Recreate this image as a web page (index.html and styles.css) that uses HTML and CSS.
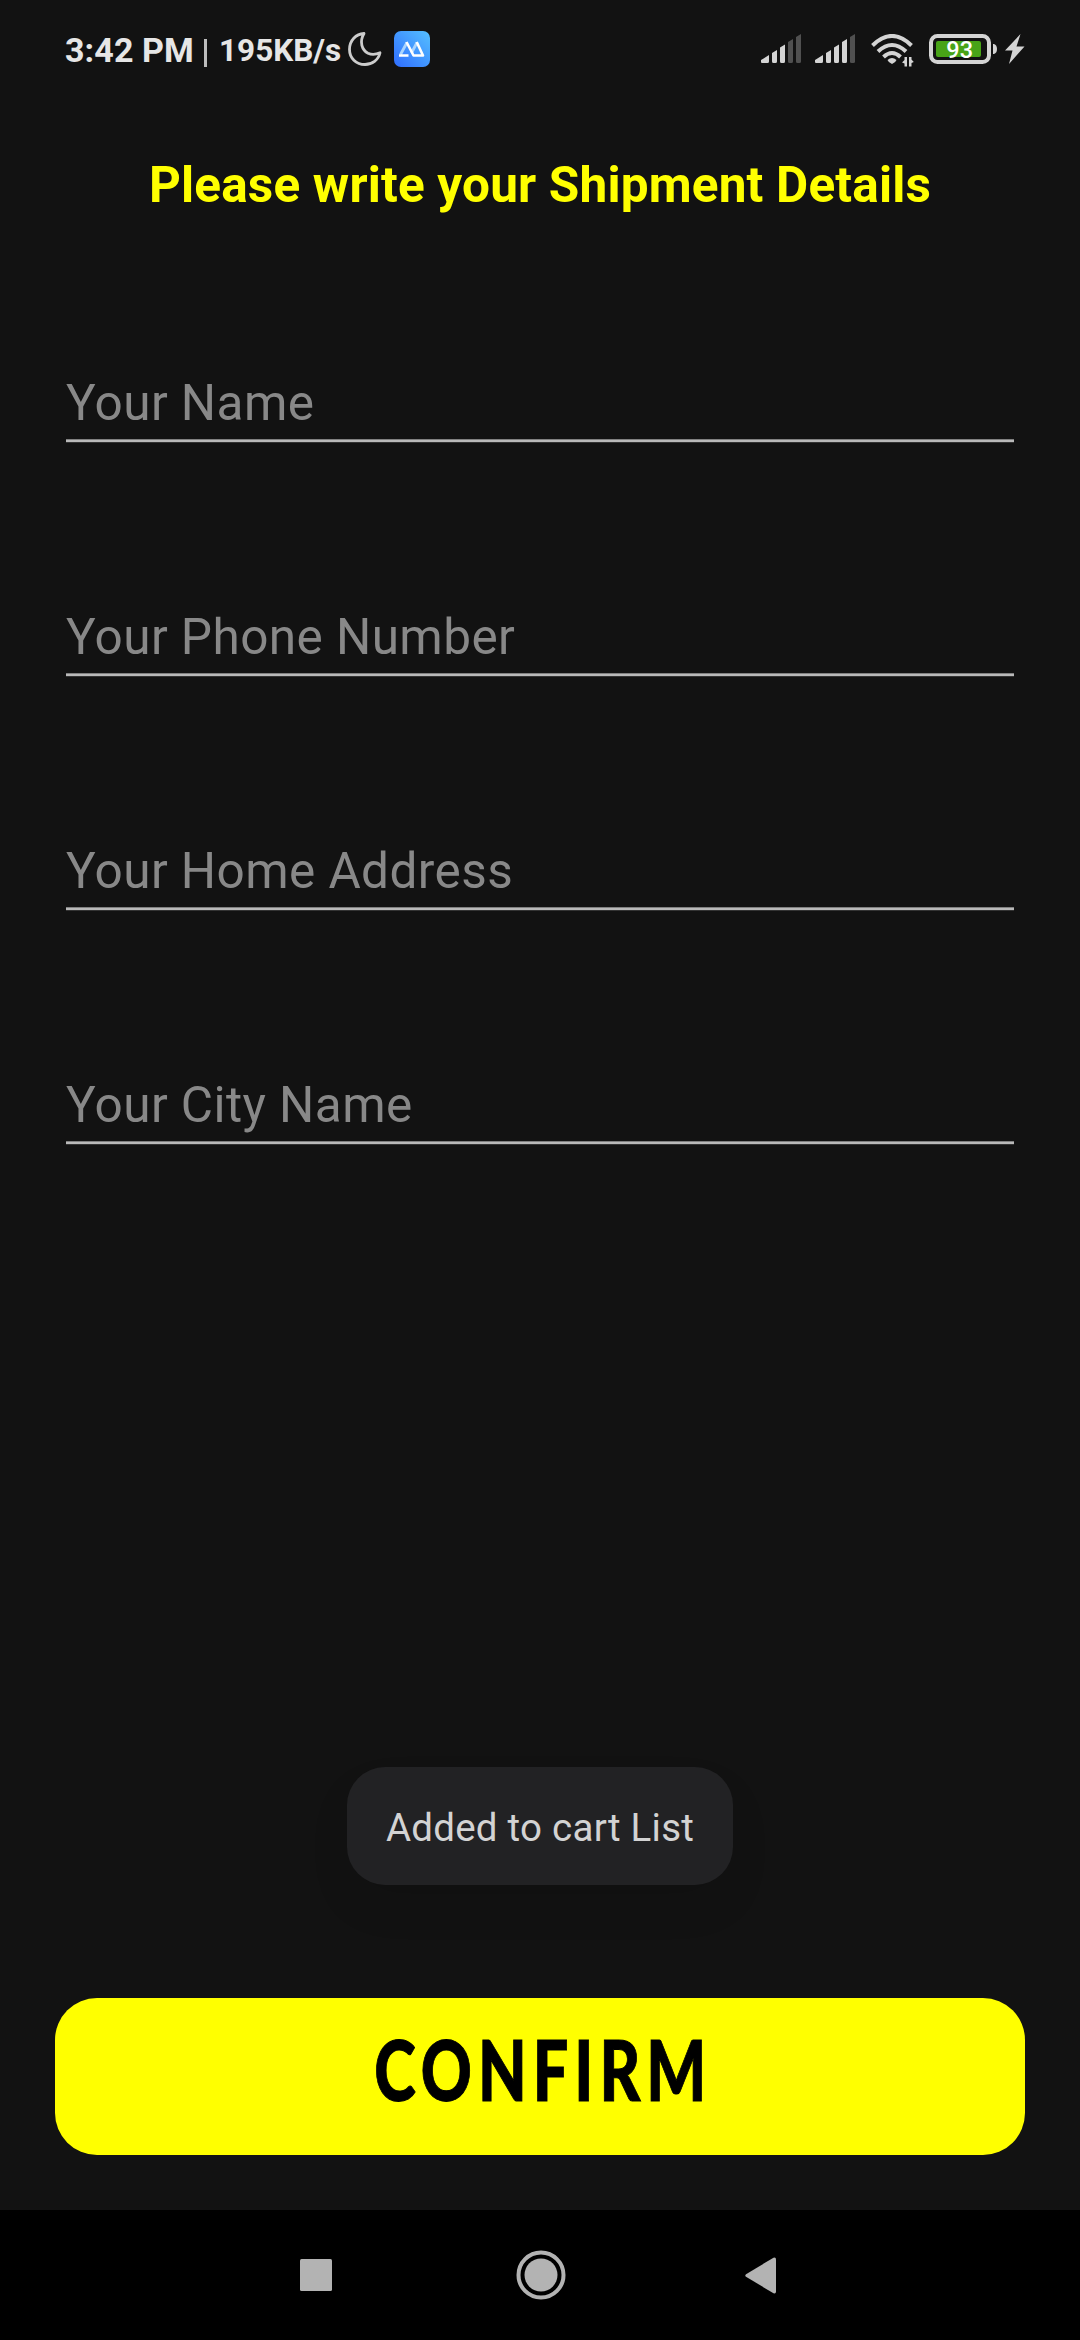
FILE: index.html
```html
<!DOCTYPE html>
<html lang="en">
<head>
<meta charset="utf-8">
<title>Shipment Details</title>
<link rel="stylesheet" href="styles.css">
</head>
<body>
<div class="screen">
  <header class="status">
    <span class="clock">3:42 PM</span>
    <span class="divider"></span>
    <span class="speed">195KB/s</span>
    <svg class="moon" width="34" height="34" viewBox="0 0 34 34"><path d="M16 1.500C11 10 14 18 20 21.200C24 23 28 22.500 32 20.800C30.500 28 24 32.500 17 32.500C8 32.500 1.500 26 1.500 17.500C1.500 8.500 8 2 16 1.500Z" fill="none" stroke="#ccc" stroke-width="2.800" stroke-linejoin="round"/></svg>
    <svg class="app" width="36" height="36" viewBox="0 0 36 36">
      <defs><linearGradient id="blue" x1="0" y1="1" x2="1" y2="0"><stop offset="0" stop-color="#2f6dff"/><stop offset="1" stop-color="#55c0ff"/></linearGradient></defs>
      <rect width="36" height="36" rx="7" fill="url(#blue)"/>
      <path d="M6.500 23.500L13 11.500M17.500 22L23 11.500" fill="none" stroke="#a9d4ff" stroke-width="2.800"/>
      <path d="M5 24.500H14.500M12.500 11L19.500 24.500H29L22.700 11" fill="none" stroke="#fff" stroke-width="2.600" stroke-linejoin="round"/>
    </svg>
    <svg class="signal" width="41" height="29" viewBox="0 0 41 29" fill="#d4d4d4">
      <path d="M0 26L8 21V27.500Q8 29 6.500 29H1Q0 29 0 28ZM11 19L16 16V27.500Q16 29 14.500 29H12.500Q11 29 11 27.500ZM19 13.500L24 10.500V27.500Q24 29 22.500 29H20.500Q19 29 19 27.500Z"/>
      <path fill="#505050" d="M27 8L32 5V27.500Q32 29 30.500 29H28.500Q27 29 27 27.500ZM35 3L40 0V27.500Q40 29 38.500 29H36.500Q35 29 35 27.500Z"/>
    </svg>
    <svg class="signal" width="41" height="29" viewBox="0 0 41 29" fill="#d4d4d4">
      <path d="M0 26L8 21V27.500Q8 29 6.500 29H1Q0 29 0 28ZM11 19L16 16V27.500Q16 29 14.500 29H12.500Q11 29 11 27.500ZM19 13.500L24 10.500V27.500Q24 29 22.500 29H20.500Q19 29 19 27.500ZM27 8L32 5V27.500Q32 29 30.500 29H28.500Q27 29 27 27.500Z"/>
      <path fill="#505050" d="M35 3L40 0V27.500Q40 29 38.500 29H36.500Q35 29 35 27.500Z"/>
    </svg>
    <svg class="wifi" width="43" height="34" viewBox="0 0 43 34">
      <g fill="none" stroke="#d4d4d4" stroke-width="4"><path d="M1.500 11.500Q21 -7.500 40.500 11.500"/><path d="M7 17.500Q21 4.500 35 17.500"/><path d="M12.500 23Q21 15 29.500 23"/></g>
      <path d="M16.500 26Q21 22 25.500 26Q25 28 21 30Q17 28 16.500 26Z" fill="#d4d4d4"/>
      <path d="M33.500 23H36V32.500H33.500V29.500L31 28.500L33.500 26ZM38 23H40.500V25.500L42.800 28L40.500 29V32.500H38Z" fill="#d4d4d4"/>
    </svg>
    <svg class="battery" width="69" height="30" viewBox="0 0 69 30">
      <rect x="2" y="2" width="58" height="26" rx="6.500" fill="none" stroke="#d4d4d4" stroke-width="4"/>
      <rect x="7" y="7" width="45" height="16" rx="2" fill="#48a317"/>
      <path d="M64 10H65Q68 11 68 15Q68 19 65 20H64Z" fill="#d4d4d4"/>
      <text class="level" x="30.700" y="23.600">93</text>
    </svg>
    <svg class="bolt" width="20" height="30" viewBox="0 0 20 30"><path d="M15.500 0L0 16.500H7.500L4 30L19.500 12.500H11.500Z" fill="#d4d4d4"/></svg>
  </header>

  <main class="page">
    <h1 class="title">Please write your Shipment Details</h1>
    <form class="form">
      <input class="field" type="text" placeholder="Your Name">
      <input class="field" type="tel" placeholder="Your Phone Number">
      <input class="field" type="text" placeholder="Your Home Address">
      <input class="field" type="text" placeholder="Your City Name">
    </form>
    <div class="toast" role="status">Added to cart List</div>
    <button class="confirm" type="button"><span class="confirm-label">CONFIRM</span></button>
  </main>

  <nav class="nav">
    <svg width="32" height="32" viewBox="0 0 32 32"><rect width="32" height="32" rx="1.500" fill="#b3b3b3"/></svg>
    <svg class="home" width="50" height="50" viewBox="0 0 50 50"><circle cx="25" cy="25" r="22.500" fill="none" stroke="#b3b3b3" stroke-width="4"/><circle cx="25" cy="25" r="16.500" fill="#b3b3b3"/></svg>
    <svg class="back" width="31" height="37" viewBox="0 0 31 37"><path d="M1 17.200L28.500 .7Q31 0 31 2.500V34.500Q31 37 28.500 36.300L1 19.800Q-.5 18.500 1 17.200Z" fill="#b3b3b3"/></svg>
  </nav>
</div>
</body>
</html>
```

FILE: styles.css
```css
* { box-sizing: border-box; }

body {
  margin: 0;
  background: #121212;
  font-family: Roboto, sans-serif;
}

.screen {
  display: flex;
  flex-direction: column;
  width: 1080px;
  height: 2340px;
  background: #121212;
  overflow: hidden;
}

.status {
  display: flex;
  align-items: flex-start;
  height: 98px;
  padding: 30px 55px 0 65px;
  color: #e6e6e6;
  font-weight: 700;
  white-space: nowrap;
}

.clock {
  width: 139px;
  font-size: 34px;
  line-height: 41px;
  letter-spacing: .1px;
}

.divider {
  width: 3px;
  height: 28px;
  margin: 9px 12px 0 0;
  background: #bdbdbd;
}

.speed {
  width: 128px;
  font-size: 31.5px;
  line-height: 42px;
}

.moon { margin: 2px 0 0 1px; }
.app { margin: 1px auto 0 12px; }
.signal { margin: 4px 13px 0 0; }
.wifi { margin: 4px 15px 0 2px; }
.battery { margin: 4px 7px 0 0; }
.bolt { margin-top: 4px; }

.level {
  fill: #fff;
  font-size: 23.5px;
  font-weight: 500;
  text-anchor: middle;
}

.page {
  display: flex;
  flex-direction: column;
  align-items: center;
  height: 2112px;
  padding: 57px 55px 55px;
}

.title {
  margin: 0;
  color: #ff0;
  font-size: 49.5px;
  font-weight: 700;
  line-height: 60px;
  letter-spacing: .18px;
  white-space: nowrap;
}

.form {
  display: flex;
  flex-direction: column;
  gap: 164px;
  width: 948px;
  margin-top: 158px;
}

.field {
  width: 100%;
  height: 70px;
  padding: 0 0 10px;
  border: 0;
  outline: 0;
  background: linear-gradient(#808080 1px, #b9b9b9 1px 3px, #333 3px) bottom / 100% 4px no-repeat;
  color: #fff;
  font-family: inherit;
  font-size: 49.5px;
  line-height: 60px;
  letter-spacing: .42px;
}

.field::placeholder {
  color: #888;
  opacity: 1;
}

.toast {
  width: 386px;
  height: 118px;
  margin-top: auto;
  border-radius: 38px;
  background: #222224;
  box-shadow: 0 22px 40px rgba(0, 0, 0, .08);
  color: #d3d3d3;
  font-size: 38.5px;
  line-height: 121px;
  letter-spacing: .25px;
  text-align: center;
  white-space: nowrap;
}

.confirm {
  display: flex;
  align-items: center;
  justify-content: center;
  width: 970px;
  height: 157px;
  margin-top: 113px;
  padding: 0 0 16px 6px;
  border: 0;
  border-radius: 42px;
  background: #ff0;
  color: #000;
}

.confirm-label {
  font-family: Lato, sans-serif;
  font-size: 84px;
  font-weight: 900;
  line-height: 100px;
  letter-spacing: 8px;
  transform: scaleX(.75);
  -webkit-text-stroke: 1px #000;
}

.nav {
  display: flex;
  align-items: center;
  height: 130px;
  padding: 0 0 0 300px;
  background: #000;
}

.home { margin-left: 184px; }
.back { margin-left: 179px; }
```
